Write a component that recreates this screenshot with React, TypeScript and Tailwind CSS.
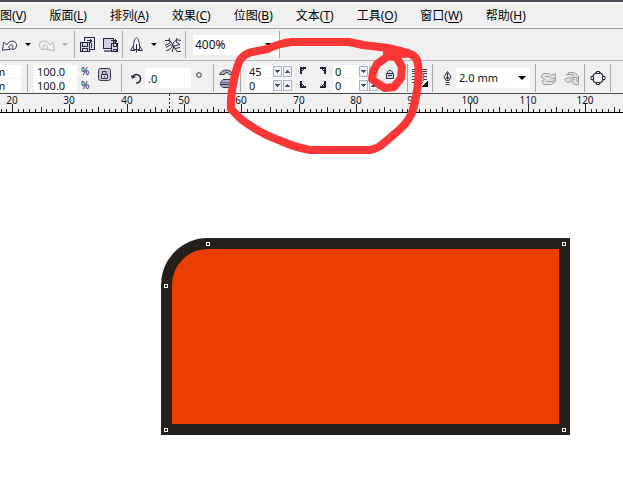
import React, { useEffect, useState } from 'react';

const cjk = "font-['Noto_Sans','Noto_Sans_CJK_SC',sans-serif]";

const menus: [string, string][] = [
  ['图', 'V'],
  ['版面', 'L'],
  ['排列', 'A'],
  ['效果', 'C'],
  ['位图', 'B'],
  ['文本', 'T'],
  ['工具', 'O'],
  ['窗口', 'W'],
  ['帮助', 'H'],
];

function Separator() {
  return <div className="w-px shrink-0 self-stretch bg-[#a9a9ab]" />;
}

function Caret({ muted = false }: { muted?: boolean }) {
  return (
    <svg viewBox="0 0 6 3" className={`h-[3px] w-1.5 shrink-0 ${muted ? 'fill-[#aaaaaa]' : 'fill-black'}`}>
      <path d="M0 0H6L3 3Z" />
    </svg>
  );
}

function Tool({ label, children, className = '' }: { label: string; children: React.ReactNode; className?: string }) {
  return (
    <button aria-label={label} className={`flex shrink-0 items-center justify-center ${className}`}>
      {children}
    </button>
  );
}

function UndoShape({ color, fill }: { color: string; fill: string }) {
  return (
    <svg width="18" height="14" viewBox="0 0 18 14" fill={fill} stroke={color} strokeWidth="1">
      <path d="M1.500 12.500L3 4L6 7C9 2 14 2 16 5C17 7 16.500 9 14.500 11.500H11.500C13 9 13 7 11.500 7C10 6.500 9 8 8 9L10 11.500Z" />
    </svg>
  );
}

function NumberField({ label, value, className = '' }: { label: string; value: string; className?: string }) {
  return (
    <input
      aria-label={label}
      defaultValue={value}
      className={`block h-[13px] min-w-0 bg-white text-[11px] leading-[13px] text-[#111122] outline-none ${className}`}
    />
  );
}

function Spinner({ label, value }: { label: string; value: string }) {
  return (
    <div className="flex h-[13px] items-center gap-px bg-white">
      <NumberField label={label} value={value} className="w-[25px] pl-0.5" />
      {['down', 'up'].map((dir) => (
        <button
          key={dir}
          aria-label={`${label} ${dir}`}
          className="flex h-[11px] w-[9px] items-center justify-center border border-[#a8b4c8] bg-[#f0f4fa]"
        >
          <svg width="5" height="3" viewBox="0 0 5 3" fill="#46516d" shapeRendering="crispEdges">
            <path d={dir === 'down' ? 'M0 0H5L2.5 3Z' : 'M0 3H5L2.5 0Z'} />
          </svg>
        </button>
      ))}
    </div>
  );
}

function Corners({ mirrored = false }: { mirrored?: boolean }) {
  return (
    <svg
      width="6"
      height="22"
      viewBox="0 0 6 22"
      fill="none"
      stroke="#222236"
      strokeWidth="2"
      className={`shrink-0 ${mirrored ? '-scale-x-100' : ''}`}
    >
      <path d="M1 7V1H6M1 14V20H6" />
      <path d="M2 4L4 2M2 17L4 19" strokeWidth="1" />
    </svg>
  );
}

function MenuBar() {
  return (
    <nav className={`flex h-[25px] items-center gap-[23px] overflow-hidden whitespace-nowrap border-b border-[#9c9c9e] bg-[#f0f0f1] text-[12px] text-black ${cjk}`}>
      {menus.map(([name, key]) => (
        <button key={name} className="shrink-0 leading-[20px]">
          {name}(<u className="underline-offset-2">{key}</u>)
        </button>
      ))}
    </nav>
  );
}

function StandardBar() {
  return (
    <div className="flex h-8 items-center overflow-hidden border-b border-[#b4b4b6] bg-[#f0f0f1] py-0.5">
      <Tool label="Undo" className="ml-px w-[17px]"><UndoShape color="#29293f" fill="#f8f8ff" /></Tool>
      <Tool label="Undo list" className="w-[19px]"><Caret /></Tool>
      <Tool label="Redo" className="w-[19px]"><span className="-scale-x-100"><UndoShape color="#b2b2b4" fill="#f4f4f4" /></span></Tool>
      <Tool label="Redo list" className="w-[18px]"><Caret muted /></Tool>
      <Separator />
      <Tool label="Import" className="ml-1 w-[17px]">
        <svg width="17" height="17" viewBox="0 0 17 17" fill="none" stroke="#25253c" shapeRendering="crispEdges">
          <path d="M5.500 5V1.500H15.500V13.500H11" fill="#e4e4f3" />
          <path d="M1.500 6.500H10.500V15.500H1.500Z" fill="#d2d2e5" />
          <path d="M3.500 6V10.500H8.500V6M3.500 15V12.500H8.500V15M7.500 4.500H13M11.500 2.500V6.500M12.500 3.500V5.500M12.500 7V12" />
        </svg>
      </Tool>
      <Tool label="Export" className="ml-1.5 w-[17px]">
        <svg width="17" height="17" viewBox="0 0 17 17" fill="none" stroke="#25253c" shapeRendering="crispEdges">
          <path d="M1.500 2.500H11.500V12.500H1.500Z" fill="#d0d0e6" />
          <path d="M2 14.500H12M12.500 4V14" strokeWidth="2" stroke="#77778c" />
          <path d="M9.500 7.500H15.500V15.500H9.500Z" fill="#dcdced" />
          <path d="M11 7V10H14V7M11 15V13H14V15M9 4.500H15M13.500 2.500V6.500M14.500 3.500V5.500" />
        </svg>
      </Tool>
      <div className="ml-[3px] flex self-stretch"><Separator /></div>
      <Tool label="Launcher" className="ml-1.5 w-[15px]">
        <svg width="15" height="16" viewBox="0 0 15 16" fill="#f4f4ff" stroke="#292941">
          <path d="M5 8L1.500 13.500H5M10 8L13.500 13.500H10" />
          <path d="M7.500 .5C4.500 3 4.500 7 4.500 12.500H10.500C10.500 7 10.500 3 7.500 .5Z" />
          <path d="M7.500 7V12M7.500 12V15.500M5.500 12.500V14M9.500 12.500V14" />
        </svg>
      </Tool>
      <Tool label="Launcher list" className="w-[19px]"><Caret /></Tool>
      <Tool label="Welcome screen" className="ml-px w-[18px]">
        <svg width="18" height="16" viewBox="0 0 18 16" fill="none" stroke="#2b2b43">
          <path d="M1 3.500H6L13 14.500H17M2 13.500C7 13 8 10 9 7S12 2 17 3.500M5 1L6 6L1 8.500M8 15L10 9L16 7.500L12 5L13 1M2 10.500L7 7.500L11 11.500L16 10.500" />
        </svg>
      </Tool>
      <div className="ml-[3px] flex self-stretch"><Separator /></div>
      <div className="relative ml-[7px] flex shrink-0 items-center">
        <select
          aria-label="Zoom level"
          className="h-5 w-[86px] appearance-none bg-white pl-0.5 font-['Noto_Sans',sans-serif] text-[12px] leading-5 text-[#111122] outline-none"
        >
          <option>400%</option>
        </select>
        <svg viewBox="0 0 8 4" className="pointer-events-none absolute right-1.5 h-1 w-2"><path d="M0 0H8L4 4Z" /></svg>
      </div>
      <Separator />
    </div>
  );
}

function PropertyBar() {
  return (
    <div className="flex h-[33px] items-center overflow-hidden border-b border-[#4b4b4d] bg-[#f0f0f1] pb-px pt-[3px] font-['Noto_Sans',sans-serif]">
      <div className="flex shrink-0 flex-col gap-px">
        <NumberField label="Width" value="m" className="w-[21px] indent-[-5px]" />
        <NumberField label="Height" value="m" className="w-[21px] indent-[-5px]" />
      </div>
      <div className="ml-1.5 flex self-stretch"><Separator /></div>
      <div className="ml-1.5 flex shrink-0 flex-col gap-px">
        <NumberField label="Horizontal scale" value="100.0" className="w-[43px] pl-[3px]" />
        <NumberField label="Vertical scale" value="100.0" className="w-[43px] pl-[3px]" />
      </div>
      <div className="ml-1 flex w-3 shrink-0 flex-col text-[10px] leading-[14px] text-[#111122]">
        <span>%</span><span>%</span>
      </div>
      <Tool label="Lock ratio" className="ml-1 w-[15px] pb-2">
        <svg width="13" height="13" viewBox="0 0 13 13" fill="#d4d4df" stroke="#34344c">
          <rect x=".5" y=".5" width="12" height="12" rx="2" fill="#c8c8d1" />
          <path d="M3.500 6.500H9.500V10.500H3.500ZM4.500 6V3.500H7.500M8 3V6" />
          <path d="M6.500 8V9.500" />
        </svg>
      </Tool>
      <div className="ml-[9px] flex self-stretch"><Separator /></div>
      <label htmlFor="angle" className="ml-2 shrink-0">
        <svg width="13" height="13" viewBox="0 0 13 13" fill="none" stroke="#29293d" strokeWidth="1.6">
          <path d="M2.500 5A4.200 4.200 0 1 1 6 11" />
          <path d="M.5 3.500L2.500 7L6 4.500Z" fill="#29293d" stroke="none" />
        </svg>
      </label>
      <input id="angle" aria-label="Rotation angle" defaultValue=".0" className="ml-0.5 h-5 w-[46px] min-w-0 shrink-0 bg-white pl-[3px] text-[11px] text-[#111122] outline-none" />
      <svg width="6" height="22" viewBox="0 0 6 22" fill="none" stroke="#333" className="ml-[5px] shrink-0"><circle cx="3" cy="8" r="2.300" /></svg>
      <div className="ml-[11px] flex self-stretch"><Separator /></div>
      <div className="ml-[5px] flex w-[15px] shrink-0 flex-col items-center gap-0.5">
        <button aria-label="Mirror horizontally">
          <svg width="15" height="8" viewBox="0 0 15 8" className="block" fill="#aeb0c9" stroke="#343448">
            <path d="M.5 5.500C3 1 7 0 11 2L14.500 5.500H10L8 3L5 5.500Z" />
          </svg>
        </button>
        <button aria-label="Mirror vertically">
          <svg width="15" height="9" viewBox="0 0 15 9" className="block" fill="#aeb0c9" stroke="#343448">
            <path d="M1 4L4 .5H12L14 4ZM1 5.500H13L10 8.500H4Z" />
          </svg>
        </button>
      </div>
      <div className="ml-1.5 flex self-stretch"><Separator /></div>
      <div className="ml-1.5 flex shrink-0 flex-col gap-px">
        <Spinner label="Top left radius" value="45" />
        <Spinner label="Bottom left radius" value="0" />
      </div>
      <div className="ml-2 flex w-[26px] shrink-0 justify-between">
        <Corners /><Corners mirrored />
      </div>
      <div className="ml-[7px] flex shrink-0 flex-col gap-px">
        <Spinner label="Top right radius" value="0" />
        <Spinner label="Bottom right radius" value="0" />
      </div>
      <Tool label="Round corners together" className="ml-1.5 w-3 pb-2">
        <svg width="8" height="9" viewBox="0 0 8 9" fill="#d4d5e5" stroke="#303047">
          <path d="M.5 3.500H7.500V8.500H.5ZM1.500 3V2L3 .5H5L6.500 2V3M2 5.500H6" />
        </svg>
      </Tool>
      <div className="ml-[11px] flex self-stretch"><Separator /></div>
      <Tool label="Wrap text" className="ml-1 w-[17px]">
        <svg width="18" height="20" viewBox="0 0 18 20" fill="none" stroke="#333346" shapeRendering="crispEdges">
          <path d="M0 1.500H16M0 3.500H16M0 5.500H4M13 5.500H16M0 8.500H4M13 8.500H16M0 11.500H4M13 11.500H16M0 14.500H12" />
          <path d="M4.500 5.500H12.500V12.500H4.500Z" fill="#bfc7da" stroke="#66708c" />
          <path d="M17 13V19H11Z" fill="#111" stroke="none" />
        </svg>
      </Tool>
      <div className="ml-[3px] flex self-stretch"><Separator /></div>
      <label htmlFor="outline" className="ml-2.5 shrink-0">
        <svg width="9" height="14" viewBox="0 0 9 14" fill="none" stroke="#29293d">
          <path d="M4.500 .5L1 6L3 9.500H6L8 6ZM4.500 2V7M2.500 11.500H6.500M2.500 13.500H6.500" />
          <circle cx="4.500" cy="7" r="1" fill="#29293d" />
        </svg>
      </label>
      <div className="relative ml-1 flex shrink-0 items-center">
        <select id="outline" aria-label="Outline width" className="h-5 w-[74px] appearance-none bg-white pl-[3px] text-[11px] leading-5 text-[#111122] outline-none">
          <option>2.0 mm</option>
        </select>
        <svg viewBox="0 0 8 4" className="pointer-events-none absolute right-1 h-1 w-2"><path d="M0 0H8L4 4Z" /></svg>
      </div>
      <div className="ml-[5px] flex self-stretch"><Separator /></div>
      <Tool label="To front" className="ml-[5px] w-4">
        <svg width="16" height="13" viewBox="0 0 16 13" fill="#e4e4e4" stroke="#9d9d9f">
          <path d="M.5 3.500L3 1.500H8L10 3.500L14.500 1.500V9.500L10 12.500H2.500L1 9L4 7.500L1 6Z" />
          <path d="M4 4.500H8L10 6.500H15M5 9.500H12L14.500 7.500" />
        </svg>
      </Tool>
      <Tool label="To back" className="ml-[7px] w-4">
        <svg width="16" height="14" viewBox="0 0 16 14" fill="#e4e4e4" stroke="#9d9d9f">
          <path d="M4.500 1.500H10L14.500 5V13.500H10L9 11H2.500L.5 8.500L4 6.500Z" />
          <path d="M2 3.500H9V7H3M6 9H10V6.500H13V11" />
        </svg>
      </Tool>
      <div className="ml-1 flex self-stretch"><Separator /></div>
      <Tool label="Convert to curves" className="ml-[5px] w-4">
        <svg width="16" height="16" viewBox="0 0 16 16" fill="none" stroke="#252530">
          <circle cx="8" cy="8" r="5.500" strokeWidth="1.300" />
          <path d="M6.500 1.500H9.500V3.500H6.500ZM6.500 12.500H9.500V14.500H6.500ZM1 6.500H3.500V9.500H1ZM12.500 6.500H15V9.500H12.500Z" fill="#f0f0f1" />
        </svg>
      </Tool>
      <div className="ml-1 flex self-stretch"><Separator /></div>
    </div>
  );
}

const unit = 5.73;
const originX = 12;

function Ruler() {
  const [width, setWidth] = useState(window.innerWidth);
  useEffect(() => {
    const update = () => setWidth(window.innerWidth);
    window.addEventListener('resize', update);
    return () => window.removeEventListener('resize', update);
  }, []);
  const ticks = Array.from({ length: Math.floor((width - originX) / unit) + 3 }, (_, i) => i - 2);
  const labels = ticks.filter((i) => i % 10 === 0 && originX + i * unit < width - 12);

  return (
    <svg className="block h-5 w-full shrink-0 bg-[#f0f0f1]" shapeRendering="crispEdges">
      {ticks.map((i) => {
        const x = Math.round(originX + i * unit);
        const length = i % 10 === 0 ? 8 : i % 5 === 0 ? 5 : 3;
        return <rect key={i} x={x} y={18 - length} width="1" height={length} fill="#222" />;
      })}
      {labels.map((i) => (
        <text
          key={i}
          x={Math.round(originX + i * unit)}
          y="10"
          textAnchor="middle"
          className="fill-[#111122] font-['Noto_Sans',sans-serif] text-[10px]"
        >
          {20 + i}
        </text>
      ))}
      <path d="M169.500 0V18" stroke="#222" strokeDasharray="2 2" />
      <rect y="18" width="100%" height="1" fill="#000" />
      <rect y="19" width="100%" height="1" fill="#fff" />
    </svg>
  );
}

const nodes = [
  [208, 130],
  [166, 172],
  [564, 130],
  [166, 316],
  [564, 316],
];

function Canvas() {
  return (
    <main className="min-h-0 flex-1 bg-white">
      <svg width="600" height="340" viewBox="0 0 600 340" className="block">
        <path d="M208 129.500H564.500V315.500H166.500V171A41.500 41.500 0 0 1 208 129.500Z" fill="#ea3f00" stroke="#25201c" strokeWidth="11" />
        {nodes.map(([x, y]) => (
          <rect key={`${x}-${y}`} x={x - 1.5} y={y - 1.5} width="3" height="3" fill="#171717" stroke="#fff" />
        ))}
      </svg>
    </main>
  );
}

function Annotation() {
  return (
    <svg width="440" height="160" viewBox="0 0 440 160" fill="none" stroke="#fb3636" strokeWidth="8" strokeLinecap="round" strokeLinejoin="round" className="pointer-events-none absolute left-0 top-0">
      <path d="M231 109C230 94 235 72 239 62Q243 54 252 52L268 49Q280 43 292 42H349L363 45L388 48L404 52Q414 54 417 60C421 73 417 93 414 106Q411 120 399 130L384 143Q377 149 370 150H310Q294 147 281 141Q264 135 251 126Q241 120 236 114Z" />
      <path d="M387 57L377 64L373 72L372 79L377 83L385 88L394 87L401 78L402 67L397 58L387 55" />
      <path d="M387 53L396 53L405 54" />
    </svg>
  );
}

export default function App() {
  return (
    <div className="relative flex min-h-screen w-full flex-col overflow-hidden bg-white">
      <header className="shrink-0">
        <div className="h-1 border-b-2 border-[#fafafa] bg-[#4c4854]" />
        <MenuBar />
        <StandardBar />
        <PropertyBar />
      </header>
      <Ruler />
      <Canvas />
      <Annotation />
    </div>
  );
}
